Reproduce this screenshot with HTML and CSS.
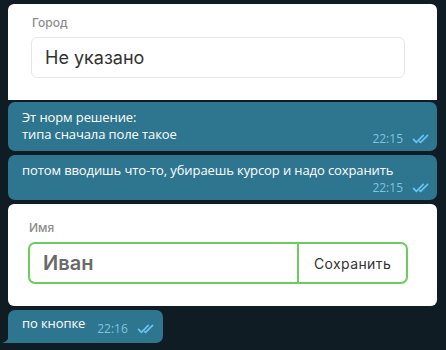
FILE: index.html
```html
<!DOCTYPE html>
<html lang="ru">
  <head>
    <meta charset="UTF-8" />
    <meta name="viewport" content="width=device-width, initial-scale=1.0" />
    <title>Чат</title>
    <link rel="stylesheet" href="styles.css">
  </head>
  <body>
    <div class="chat">
      <div class="card card-city">
        <div class="label">Город</div>
        <div class="field">Не указано</div>
      </div>

      <div class="bubble bubble-short">
        <div class="text">Эт норм решение:<br />типа сначала поле такое</div>
        <div class="meta meta-up">
          <span class="time">22:15</span>
          <svg class="check" viewBox="0 0 18 10"><path d="M1.5 5.4 L4.4 8.4 L11.2 1.4 M7.8 7.6 L8.6 8.4 L15.6 1.4" /></svg>
        </div>
      </div>

      <div class="bubble">
        <div class="text">потом вводишь что-то, убираешь курсор и надо сохранить</div>
        <div class="meta">
          <span class="time">22:15</span>
          <svg class="check" viewBox="0 0 18 10"><path d="M1.5 5.4 L4.4 8.4 L11.2 1.4 M7.8 7.6 L8.6 8.4 L15.6 1.4" /></svg>
        </div>
      </div>

      <div class="card card-name">
        <div class="label">Имя</div>
        <div class="field-group">
          <div class="field-value">Иван</div>
          <div class="field-btn">Сохранить</div>
        </div>
      </div>

      <div class="bubble bubble-inline">
        <div class="text">по кнопке</div>
        <div class="meta">
          <span class="time">22:16</span>
          <svg class="check" viewBox="0 0 18 10"><path d="M1.5 5.4 L4.4 8.4 L11.2 1.4 M7.8 7.6 L8.6 8.4 L15.6 1.4" /></svg>
        </div>
        <svg class="tail" viewBox="0 0 8 12"><path d="M8 0 C8 6 6 10 0 12 L8 12 Z" /></svg>
      </div>
    </div>
  </body>
</html>
```

FILE: styles.css
```css
* {
  margin: 0;
  padding: 0;
  box-sizing: border-box;
}
body {
  background-color: #0f1c24;
  width: 446px;
  height: 350px;
  overflow: hidden;
}
.chat {
  display: flex;
  flex-direction: column;
  align-items: flex-start;
  gap: 4px;
  padding: 4px 0 0 8px;
}
/* белые карточки с полями */
.card {
  width: 429px;
  background-color: #fff;
  font-family: Inter, "Noto Sans", sans-serif;
}
.card .label {
  font-size: 12px;
  line-height: 15px;
  font-weight: 500;
  color: #8c8c8c;
}
.card-city {
  border-radius: 6px 6px 0 0;
  padding: 11px 0 22px 24px;
  margin-bottom: -2px;
}
.card-city .field {
  margin: 7px 0 0 -1px;
  width: 374px;
  height: 41px;
  border: 1px solid #e6e6e6;
  border-radius: 6px;
  display: flex;
  align-items: center;
  padding-left: 13px;
  font-size: 18px;
  color: #333;
}
.card-name {
  border-radius: 6px;
  padding: 16px 0 22px 21px;
}
.field-group {
  margin: 7px 0 0 -1px;
  width: 380px;
  height: 42px;
  border: 2px solid #6bcd5c;
  border-radius: 7px;
  display: flex;
}
.field-value {
  flex: 1;
  display: flex;
  align-items: center;
  padding-left: 13px;
  font-size: 20px;
  font-weight: 600;
  color: #6a6a6a;
  border-right: 2px solid #6bcd5c;
}
.field-btn {
  width: 107px;
  display: flex;
  align-items: center;
  justify-content: center;
  font-size: 14px;
  letter-spacing: 0.4px;
  color: #333;
}
/* сообщения */
.bubble {
  position: relative;
  width: 429px;
  background-color: #2e7590;
  border-radius: 7px;
  padding: 7px 7px 5px 14px;
  font-family: "Open Sans", "Noto Sans", sans-serif;
  color: #fff;
}
.bubble .text {
  font-size: 13px;
  line-height: 17px;
  letter-spacing: -0.1px;
}
.meta {
  display: flex;
  justify-content: flex-end;
  align-items: center;
  gap: 9px;
  margin-top: 2px;
  height: 14px;
}
.meta-up {
  margin-top: -11px;
}
.time {
  font-size: 12px;
  line-height: 14px;
  color: #7ec4df;
}
.check {
  width: 18px;
  height: 10px;
  fill: none;
  stroke: #66c4f2;
  stroke-width: 1.7;
  stroke-linecap: round;
  stroke-linejoin: round;
}
.bubble-inline {
  width: auto;
  display: flex;
  align-items: flex-start;
  gap: 12px;
  padding: 5px 8px 7px 14px;
  border-bottom-left-radius: 0;
}
.bubble-inline .meta {
  margin-top: 7px;
}
.tail {
  position: absolute;
  left: -6px;
  bottom: 0;
  width: 8px;
  height: 12px;
  fill: #2e7590;
}
```
